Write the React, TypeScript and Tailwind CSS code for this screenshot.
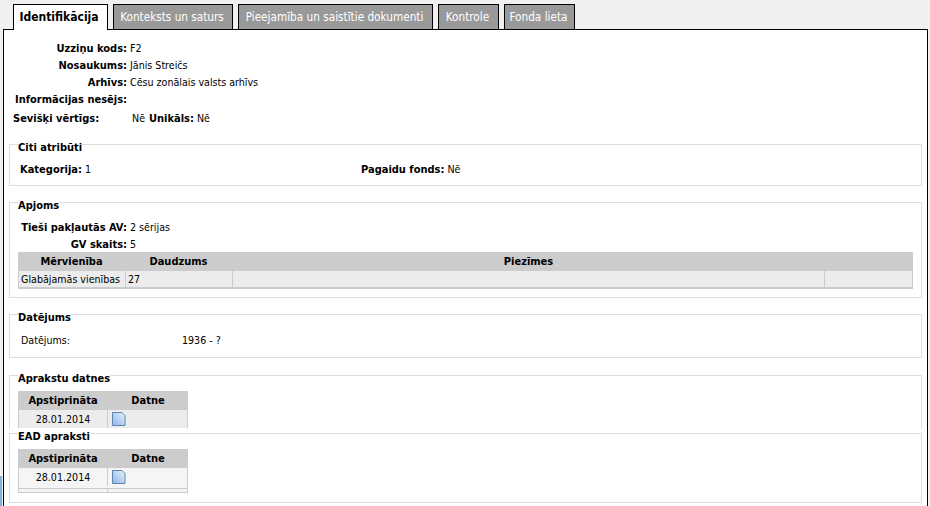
import type { ReactNode } from 'react';

const tabs = ['Konteksts un saturs', 'Pieejamība un saistītie dokumenti', 'Kontrole', 'Fonda lieta'];
const tabWidths = ['w-[120px]', 'w-[195px]', 'w-[61px]', 'w-[71px]'];

function Field({ label, value, top }: { label: string; value?: string; top: string }) {
  return (
    <div className={`flex ${top} h-[13px] items-center`}>
      <span className="w-[123px] shrink-0 text-right text-[11px] font-bold whitespace-nowrap">{label}</span>
      <span className="ml-[3px]">{value}</span>
    </div>
  );
}

function Group({ title, className, children }: { title: string; className: string; children?: ReactNode }) {
  return (
    <fieldset className={`mx-[5px] border border-[#dddddd] ${className}`}>
      <legend className="relative top-[3px] ml-[8px] h-[13px] text-[11px] leading-[13px] font-bold">{title}</legend>
      {children}
    </fieldset>
  );
}

function FileIcon({ id }: { id: string }) {
  return (
    <svg width="16" height="16" viewBox="0 0 16 16" className="ml-[3px]">
      <defs>
        <linearGradient id={id} x1="0" y1="1" x2="1" y2="0">
          <stop offset="0" stopColor="#8db6e6" />
          <stop offset="1" stopColor="#e4f0fb" />
        </linearGradient>
      </defs>
      <path d="M1.5 1.5h9.500l3 3v10h-12.500z" fill={`url(#${id})`} stroke="#5f85ad" />
    </svg>
  );
}

function FileTable({ id, bodyBg, clipped }: { id: string; bodyBg: string; clipped?: boolean }) {
  return (
    <div className="ml-[8px] w-[170px]">
      <div className="flex h-[19px] items-center bg-[#cccccc] text-[11px] font-bold">
        <span className="w-[90px] text-center">Apstiprināta</span>
        <span className="w-[80px] text-center">Datne</span>
      </div>
      <div className={`flex items-center border-x border-[#cccccc] ${clipped ? 'h-[18px]' : 'h-[21px] border-b pb-[2px]'} ${bodyBg}`}>
        <span className="flex h-full w-[89px] items-center justify-center border-r border-[#cccccc]">28.01.2014</span>
        <FileIcon id={id} />
      </div>
      {!clipped && (
        <div className="flex h-[4px] border-x border-b border-[#cccccc] bg-[#f5f5f5]">
          <span className="h-full w-[89px] border-r border-[#cccccc]" />
        </div>
      )}
    </div>
  );
}

export default function App() {
  return (
    <div className="relative h-[506px] w-[930px] overflow-hidden bg-[#f0f0f0] text-[10.6px] leading-[13px] text-black font-['DejaVu_Sans_Condensed','DejaVu_Sans',sans-serif]">
      <div className="absolute bottom-0 left-0 h-[30px] w-[2px] bg-[#7fb0e0]" />
      <div className="flex h-[29px] items-end gap-[5px] pl-[13px]">
        <div className="relative z-10 -mb-px flex h-[26px] w-[95px] items-center justify-center border-x border-t border-black bg-white pr-[3px] text-[12px] font-bold">
          Identifikācija
        </div>
        {tabs.map((tab, i) => (
          <div key={tab} className={`flex h-[25px] ${tabWidths[i]} items-center justify-center border-x border-t border-black bg-[#999999] pr-[2px] text-[11.7px] text-white`}>
            {tab}
          </div>
        ))}
      </div>
      <div className="ml-[3px] mr-[2px] h-[480px] border-x border-t border-black bg-white">
        <div className="pt-[12px]">
          <Field label="Uzziņu kods:" value="F2" top="" />
          <Field label="Nosaukums:" value="Jānis Streičs" top="mt-[4px]" />
          <Field label="Arhīvs:" value="Cēsu zonālais valsts arhīvs" top="mt-[4px]" />
          <Field label="Informācijas nesējs:" top="mt-[4px]" />
          <div className="mt-[6px] flex h-[13px] items-center pl-[9px]">
            <span className="w-[119px] text-[11px] font-bold">Sevišķi vērtīgs:</span>
            <span>Nē</span>
            <span className="ml-[4px] text-[11px] font-bold">Unikāls:</span>
            <span className="ml-[3px]">Nē</span>
          </div>
        </div>
        <Group title="Citi atribūti" className="mt-[13px] h-[48px]">
          <div className="flex pt-[12px] pl-[10px]">
            <span className="w-[341px]"><b className="text-[11px]">Kategorija:</b> 1</span>
            <span><b className="text-[11px]">Pagaidu fonds:</b> Nē</span>
          </div>
        </Group>
        <Group title="Apjoms" className="mt-[10px] h-[102px]">
          <div className="mt-[12px] flex h-[13px]">
            <span className="w-[117px] text-right text-[11px] font-bold">Tieši pakļautās AV:</span>
            <span className="ml-[3px]">2 sērijas</span>
          </div>
          <div className="mt-[4px] flex h-[13px]">
            <span className="w-[117px] text-right text-[11px] font-bold">GV skaits:</span>
            <span className="ml-[3px]">5</span>
          </div>
          <div className="mx-[8px] mt-[1px]">
            <div className="flex h-[19px] items-center bg-[#cccccc] text-[11px] font-bold">
              <span className="w-[107px] text-center">Mērvienība</span>
              <span className="w-[107px] text-center">Daudzums</span>
              <span className="flex-1 text-center">Piezīmes</span>
              <span className="w-[88px]" />
            </div>
            <div className="flex h-[18px] items-center border-x border-b-2 border-[#cccccc] bg-[#ececec]">
              <span className="flex h-full w-[107px] items-center border-r border-[#cccccc] pl-[2px] whitespace-nowrap">Glabājamās vienības</span>
              <span className="flex h-full w-[107px] items-center border-r border-[#cccccc] pl-[2px]">27</span>
              <span className="h-full flex-1 border-r border-[#cccccc]" />
              <span className="w-[87px]" />
            </div>
          </div>
        </Group>
        <Group title="Datējums" className="mt-[10px] h-[50px]">
          <div className="flex pt-[13px] pl-[11px]">
            <span className="w-[161px]">Datējums:</span>
            <span>1936 - ?</span>
          </div>
        </Group>
        <Group title="Aprakstu datnes" className="mt-[11px] h-[60px] overflow-hidden border-b-0">
          <div className="mt-[9px]"><FileTable id="sheet-a" bodyBg="bg-[#ececec]" clipped /></div>
        </Group>
        <Group title="EAD apraksti" className="-mt-[2px] h-[76px]">
          <div className="mt-[9px]"><FileTable id="sheet-b" bodyBg="bg-[#f5f5f5]" /></div>
        </Group>
      </div>
    </div>
  );
}
